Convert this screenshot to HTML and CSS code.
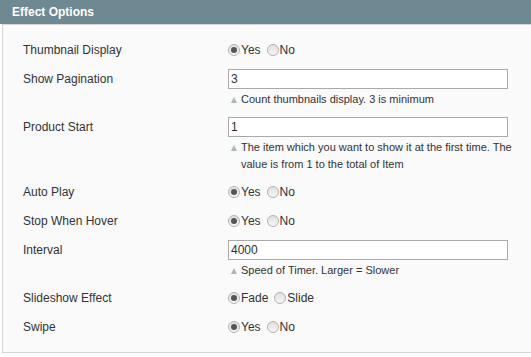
FILE: index.html
```html
<!DOCTYPE html>
<html lang="en">
<head>
    <meta charset="UTF-8">
    <meta name="viewport" content="width=device-width, initial-scale=1.0">
    <title>Effect Options</title>
    <link rel="stylesheet" href="styles.css">
</head>
<body>
    <div class="entry-edit">
        <div class="section-head">
            <h4>Effect Options</h4>
        </div>

        <fieldset class="section-body">
            <div class="form-row">
                <label class="field-label">Thumbnail Display</label>
                <div class="field-value">
                    <span class="option"><span class="radio checked"></span>Yes</span>
                    <span class="option"><span class="radio"></span>No</span>
                </div>
            </div>

            <div class="form-row">
                <label class="field-label">Show Pagination</label>
                <div class="field-value">
                    <input type="text" class="input-text" value="3">
                    <div class="note"><span class="note-icon"></span><span>Count thumbnails display. 3 is minimum</span></div>
                </div>
            </div>

            <div class="form-row">
                <label class="field-label">Product Start</label>
                <div class="field-value">
                    <input type="text" class="input-text" value="1">
                    <div class="note"><span class="note-icon"></span><span>The item which you want to show it at the first time. The value is from 1 to the total of Item</span></div>
                </div>
            </div>

            <div class="form-row">
                <label class="field-label">Auto Play</label>
                <div class="field-value">
                    <span class="option"><span class="radio checked"></span>Yes</span>
                    <span class="option"><span class="radio"></span>No</span>
                </div>
            </div>

            <div class="form-row">
                <label class="field-label">Stop When Hover</label>
                <div class="field-value">
                    <span class="option"><span class="radio checked"></span>Yes</span>
                    <span class="option"><span class="radio"></span>No</span>
                </div>
            </div>

            <div class="form-row">
                <label class="field-label">Interval</label>
                <div class="field-value">
                    <input type="text" class="input-text" value="4000">
                    <div class="note"><span class="note-icon"></span><span>Speed of Timer. Larger = Slower</span></div>
                </div>
            </div>

            <div class="form-row">
                <label class="field-label">Slideshow Effect</label>
                <div class="field-value">
                    <span class="option"><span class="radio checked"></span>Fade</span>
                    <span class="option"><span class="radio"></span>Slide</span>
                </div>
            </div>

            <div class="form-row">
                <label class="field-label">Swipe</label>
                <div class="field-value">
                    <span class="option"><span class="radio checked"></span>Yes</span>
                    <span class="option"><span class="radio"></span>No</span>
                </div>
            </div>
        </fieldset>
    </div>
</body>
</html>
```

FILE: styles.css
```css
body {
    margin: 0;
    padding: 0;
    background: #fff;
    font-family: 'Liberation Sans', Arial, sans-serif;
    font-size: 12px;
    color: #333;
}

.entry-edit {
    width: 531px;
}

/* Section header bar */
.section-head {
    background: #6f8992;
    height: 24px;
    padding: 0 12px;
}

.section-head h4 {
    margin: 0;
    font-size: 12px;
    font-weight: bold;
    line-height: 24px;
    color: #fff;
}

/* Section body */
.section-body {
    margin: 0 0 0 2px;
    padding: 15px 0 15px 20px;
    border: 1px solid #d6d6d6;
    border-right: none;
    background: #fafafa;
    display: flex;
    flex-direction: column;
    gap: 9px;
    min-width: 0;
}

.form-row {
    display: grid;
    grid-template-columns: 205px 300px;
    align-items: start;
}

.field-label {
    line-height: 20px;
}

.field-value {
    display: flex;
    flex-wrap: wrap;
    align-items: center;
    min-height: 20px;
}

/* Radio options */
.option {
    display: inline-flex;
    align-items: center;
    margin-right: 6px;
    line-height: 20px;
}

.radio {
    display: inline-block;
    box-sizing: border-box;
    width: 12px;
    height: 12px;
    margin-right: 1px;
    border: 1px solid #b2b2b2;
    border-radius: 50%;
    background: linear-gradient(#e0e0e0, #f6f6f6);
    position: relative;
}

.radio.checked::after {
    content: "";
    position: absolute;
    top: 2px;
    left: 2px;
    width: 6px;
    height: 6px;
    border-radius: 50%;
    background: #555;
}

/* Text inputs */
.input-text {
    box-sizing: border-box;
    width: 280px;
    height: 20px;
    margin: 0;
    padding: 0 2px;
    border: 1px solid #aaa;
    background: #fff;
    font-family: 'Liberation Sans', Arial, sans-serif;
    font-size: 12px;
    color: #2f2f2f;
}

/* Field notes */
.note {
    display: flex;
    width: 100%;
    margin-top: 2px;
    font-size: 11px;
    line-height: 17px;
}

.note-icon {
    flex: 0 0 13px;
    position: relative;
}

.note-icon::before {
    content: "";
    position: absolute;
    top: 6px;
    left: 3px;
    border-left: 3.5px solid transparent;
    border-right: 3.5px solid transparent;
    border-bottom: 6px solid #a9b6bc;
}
```
